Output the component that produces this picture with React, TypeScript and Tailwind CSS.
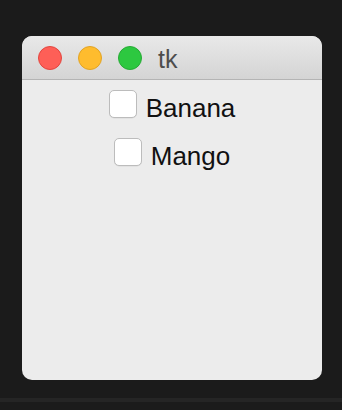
import React from "react";

function Check({ label }: { label: string }) {
  return (
    <div className="flex h-[48px] items-center justify-center gap-[9px]">
      <div className="h-[28px] w-[28px] rounded-[5px] border border-[#bcbcbc] bg-white shadow-[0_0.5px_0.5px_rgba(0,0,0,0.08)]" />
      <span className="pt-[7px] text-[26px] leading-none text-[#111]" style={{ fontFamily: '"Liberation Sans", Arial, sans-serif' }}>
        {label}
      </span>
    </div>
  );
}

export default function App() {
  return (
    <div className="relative h-[410px] w-[342px] overflow-hidden bg-[#1b1b1b] pl-[22px] pt-[36px]">
      <div className="flex h-[344px] w-[300px] flex-col overflow-hidden rounded-[10px] bg-[#ececec]">
        <div className="flex h-[44px] shrink-0 items-center border-b border-[#b4b4b4] bg-gradient-to-b from-[#e9e9e9] to-[#d4d4d4] pl-[16px]">
          <div className="flex items-center gap-[16px]">
            <div className="h-[24px] w-[24px] rounded-full border border-[#e2463f] bg-[#fe5f57]" />
            <div className="h-[24px] w-[24px] rounded-full border border-[#e1a325] bg-[#febc2e]" />
            <div className="h-[24px] w-[24px] rounded-full border border-[#27aa35] bg-[#2dc840]" />
          </div>
          <span className="ml-[16px] pt-[4px] text-[25px] leading-none text-[#4d4d4d]" style={{ fontFamily: '"Liberation Sans", Arial, sans-serif' }}>
            tk
          </span>
        </div>
        <div className="flex flex-col">
          <Check label="Banana" />
          <Check label="Mango" />
        </div>
      </div>
      <div className="absolute left-0 top-[398px] h-[4px] w-full bg-[#252525]" />
    </div>
  );
}
